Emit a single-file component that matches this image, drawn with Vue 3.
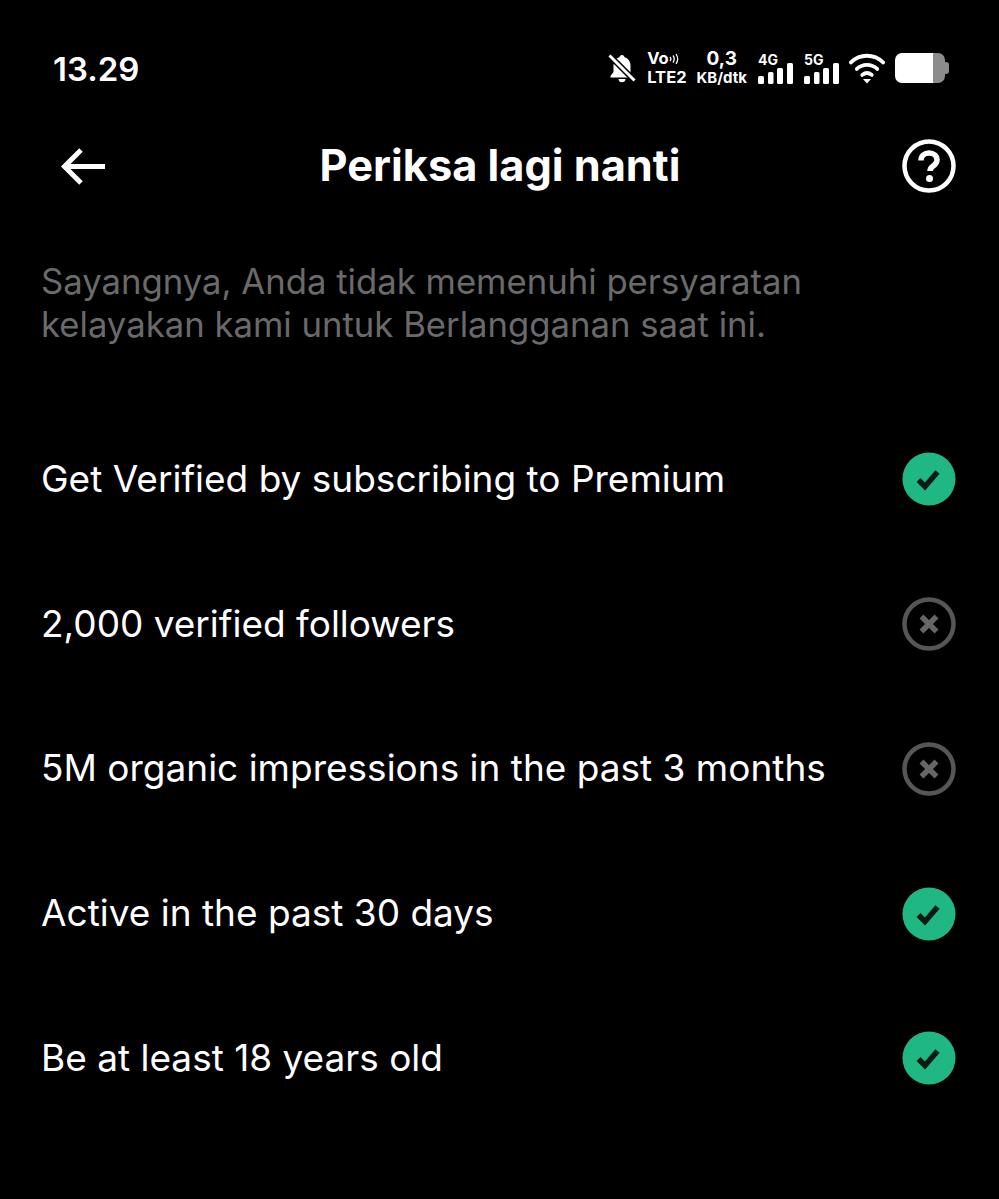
<template>
  <div class="screen">
    <div class="status">
      <span class="time">13.29</span>
      <div class="indicators">
        <svg class="bell" width="30" height="32" viewBox="0 0 30 32">
          <path d="M15 3c-1.500 0-2.500 1-2.500 2.300C8.500 6.500 6.500 10 6.500 14v6L3.500 24v1.500h22L23.500 22V14c0-4-2-7.500-6-8.700C17.500 4 16.500 3 15 3z" fill="#fff" />
          <path d="M11.500 27h7c0 2-1.500 3.300-3.500 3.300s-3.500-1.300-3.500-3.300z" fill="#fff" />
          <path d="M2 3l26 26" stroke="#000" stroke-width="6" />
          <path d="M2.500 3.500l25 25" stroke="#fff" stroke-width="3" />
        </svg>
        <div class="stack volte">
          <span class="vo">Vo<svg width="10" height="12" viewBox="0 0 10 12"><path d="M1 4a3 3 0 0 1 0 4M4 2.500a6 6 0 0 1 0 7M7 1a9 9 0 0 1 0 10" fill="none" stroke="#fff" stroke-width="1.300" /></svg></span>
          <span class="lte">LTE2</span>
        </div>
        <div class="stack speed">
          <span class="num">0,3</span>
          <span class="unit">KB/dtk</span>
        </div>
        <div v-for="net in networks" :key="net" class="signal">
          <span class="gen">{{ net }}</span>
          <svg class="bars" width="35" height="21" viewBox="0 0 35 21">
            <rect x="0" y="13" width="6" height="8" rx="1.500" fill="#fff" />
            <rect x="10" y="9" width="5.500" height="12" rx="1.500" fill="#fff" />
            <rect x="19" y="5" width="6" height="16" rx="1.500" fill="#fff" />
            <rect x="29" y="0" width="6" height="21" rx="1.500" fill="#fff" />
          </svg>
        </div>
        <svg class="wifi" width="36" height="32" viewBox="0 0 40 32" preserveAspectRatio="none">
          <path d="M2 10.500C12 1.500 28 1.500 38 10.500" fill="none" stroke="#fff" stroke-width="3.800" stroke-linecap="round" />
          <path d="M8.500 17c6.500-5.500 16.500-5.500 23 0" fill="none" stroke="#fff" stroke-width="3.800" stroke-linecap="round" />
          <path d="M14.500 23c3.300-2.400 7.700-2.400 11 0" fill="none" stroke="#fff" stroke-width="3.800" stroke-linecap="round" />
          <path d="M15.500 27h9L20 31.500z" fill="#fff" />
        </svg>
        <div class="battery">
          <div class="charge"></div>
          <div class="rest"></div>
          <div class="tip"></div>
        </div>
      </div>
    </div>

    <header class="topbar">
      <svg class="back" width="48" height="38" viewBox="0 0 48 38">
        <path d="M46 19.500H6M22 3L5.500 19.500 22 36" fill="none" stroke="#fff" stroke-width="5" />
      </svg>
      <h1 class="title">Periksa lagi nanti</h1>
      <svg class="help" width="54" height="54" viewBox="0 0 54 54">
        <circle cx="27" cy="27" r="24.500" fill="none" stroke="#fff" stroke-width="4.500" />
        <path d="M19 21.500c0-4.500 3.500-7.500 8-7.500s8 2.800 8 7c0 3-1.700 4.500-3.800 6-2 1.400-3.200 2.500-3.200 5" fill="none" stroke="#fff" stroke-width="5.500" />
        <circle cx="27.500" cy="39.500" r="3.500" fill="#fff" />
      </svg>
    </header>

    <p class="intro">Sayangnya, Anda tidak memenuhi persyaratan kelayakan kami untuk Berlangganan saat ini.</p>

    <ul class="rules">
      <li v-for="rule in rules" :key="rule.text" class="rule">
        <span class="label">{{ rule.text }}</span>
        <svg v-if="rule.ok" width="54" height="54" viewBox="0 0 54 54">
          <circle cx="27" cy="27" r="26.500" fill="#1fb885" />
          <path d="M16.500 28l6.500 6.500L35.500 20" fill="none" stroke="#0a1a14" stroke-width="5.500" />
        </svg>
        <svg v-else width="54" height="54" viewBox="0 0 54 54">
          <circle cx="27" cy="27" r="24.500" fill="none" stroke="#565656" stroke-width="4.500" />
          <path d="M19.500 19.500l15 15M34.500 19.500l-15 15" fill="none" stroke="#666" stroke-width="5.500" />
        </svg>
      </li>
    </ul>
  </div>
</template>

<script setup>
const networks = ['4G', '5G']

const rules = [
  { text: 'Get Verified by subscribing to Premium', ok: true },
  { text: '2,000 verified followers', ok: false },
  { text: '5M organic impressions in the past 3 months', ok: false },
  { text: 'Active in the past 30 days', ok: true },
  { text: 'Be at least 18 years old', ok: true },
]
</script>

<style>
html, body {
  background: #000;
}
</style>

<style scoped>
.screen {
  width: 999px;
  height: 1199px;
  box-sizing: border-box;
  overflow: hidden;
  background: #000;
  color: #fff;
  font-family: Inter, "Liberation Sans", sans-serif;
  padding: 0 43px 0 41px;
}

.status {
  height: 136px;
  display: flex;
  justify-content: space-between;
  align-items: center;
  padding: 0 0 0 12px;
}

.time {
  margin-top: 2px;
  font-size: 33px;
  font-weight: 600;
}

.indicators {
  display: flex;
  align-items: center;
  gap: 10px;
  margin-right: 7px;
}

.stack {
  display: flex;
  flex-direction: column;
  font-weight: 700;
  line-height: 19px;
}

.vo {
  display: flex;
  align-items: center;
  font-size: 16.500px;
}

.lte {
  font-size: 16.500px;
}

.speed {
  align-items: center;
}

.num {
  font-size: 19px;
}

.unit {
  font-size: 15px;
}

.signal {
  position: relative;
  width: 35px;
  height: 36px;
  margin: -4px 0 0 1px;
  display: flex;
  flex-direction: column;
  justify-content: flex-end;
}

.gen {
  position: absolute;
  left: 0;
  top: 4px;
  font-size: 14px;
  font-weight: 700;
  line-height: 16px;
}

.bars {
  display: block;
}

.battery {
  display: flex;
  align-items: center;
}

.charge {
  width: 38px;
  height: 30px;
  background: #fff;
  border-radius: 7px 0 0 7px;
}

.rest {
  width: 12px;
  height: 30px;
  background: #8c8c8c;
  border-radius: 0 7px 7px 0;
}

.tip {
  width: 4px;
  height: 12px;
  background: #8c8c8c;
  border-radius: 0 3px 3px 0;
}

.topbar {
  height: 60px;
  display: flex;
  justify-content: space-between;
  align-items: center;
}

.back {
  margin-left: 18px;
}

.title {
  margin: -3px 9px 0 0;
  font-size: 43.300px;
  font-weight: 700;
}

.intro {
  margin: 64px 0 0;
  width: 820px;
  font-size: 34.700px;
  line-height: 43px;
  color: #6a6a6a;
}

.rules {
  list-style: none;
  margin: 61px 0 0;
  padding: 0;
}

.rule {
  height: 144.750px;
  display: flex;
  justify-content: space-between;
  align-items: center;
  font-size: 37px;
}

.label {
  margin-top: -2px;
}
</style>
